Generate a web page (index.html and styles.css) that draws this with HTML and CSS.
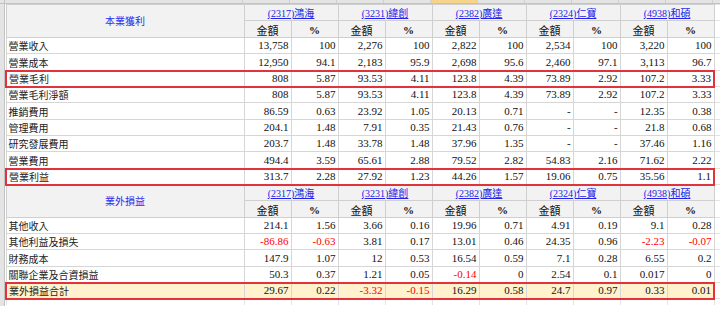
FILE: index.html
```html
<!DOCTYPE html>
<html lang="zh-Hant">
<head>
<meta charset="utf-8">
<title>損益比較</title>
<link rel="stylesheet" href="styles.css">
</head>
<body>
<div class="sheet">
  <div class="colhdr">
    <div class="corner"></div>
    <div class="ch wide">A</div>
    <div class="ch">B</div>
    <div class="ch">C</div>
    <div class="ch">D</div>
    <div class="ch">E</div>
    <div class="ch sel">F</div>
    <div class="ch">G</div>
    <div class="ch">H</div>
    <div class="ch">I</div>
    <div class="ch">J</div>
    <div class="ch">K</div>
    <div class="ch">L</div>
  </div>
  <div class="main">
    <div class="rowhdr"></div>
    <table class="grid">
      <colgroup>
        <col class="c-label">
        <col class="c-num" span="10">
        <col class="c-extra">
      </colgroup>
      <tbody>
        <tr class="h1">
          <th class="sect" rowspan="2">本業獲利</th>
          <th class="co" colspan="2"><a href="#">(2317)鴻海</a></th>
          <th class="co" colspan="2"><a href="#">(3231)緯創</a></th>
          <th class="co" colspan="2"><a href="#">(2382)廣達</a></th>
          <th class="co" colspan="2"><a href="#">(2324)仁寶</a></th>
          <th class="co" colspan="2"><a href="#">(4938)和碩</a></th>
          <td class="x"></td>
        </tr>
        <tr class="h2">
          <th class="sub">金額</th><th class="sub pct">%</th>
          <th class="sub">金額</th><th class="sub pct">%</th>
          <th class="sub">金額</th><th class="sub pct">%</th>
          <th class="sub">金額</th><th class="sub pct">%</th>
          <th class="sub">金額</th><th class="sub pct">%</th>
          <td class="x"></td>
        </tr>
        <tr class="r">
          <td class="lbl">營業收入</td>
          <td>13,758</td><td>100</td><td>2,276</td><td>100</td><td>2,822</td><td>100</td><td>2,534</td><td>100</td><td>3,220</td><td>100</td>
          <td class="x"></td>
        </tr>
        <tr class="r tall">
          <td class="lbl">營業成本</td>
          <td>12,950</td><td>94.1</td><td>2,183</td><td>95.9</td><td>2,698</td><td>95.6</td><td>2,460</td><td>97.1</td><td>3,113</td><td>96.7</td>
          <td class="x"></td>
        </tr>
        <tr class="r box">
          <td class="lbl">營業毛利</td>
          <td>808</td><td>5.87</td><td>93.53</td><td>4.11</td><td>123.8</td><td>4.39</td><td>73.89</td><td>2.92</td><td>107.2</td><td class="end">3.33</td>
          <td class="x"></td>
        </tr>
        <tr class="r">
          <td class="lbl">營業毛利淨額</td>
          <td>808</td><td>5.87</td><td>93.53</td><td>4.11</td><td>123.8</td><td>4.39</td><td>73.89</td><td>2.92</td><td>107.2</td><td>3.33</td>
          <td class="x"></td>
        </tr>
        <tr class="r tall">
          <td class="lbl">推銷費用</td>
          <td>86.59</td><td>0.63</td><td>23.92</td><td>1.05</td><td>20.13</td><td>0.71</td><td>-</td><td>-</td><td>12.35</td><td>0.38</td>
          <td class="x"></td>
        </tr>
        <tr class="r">
          <td class="lbl">管理費用</td>
          <td>204.1</td><td>1.48</td><td>7.91</td><td>0.35</td><td>21.43</td><td>0.76</td><td>-</td><td>-</td><td>21.8</td><td>0.68</td>
          <td class="x"></td>
        </tr>
        <tr class="r">
          <td class="lbl">研究發展費用</td>
          <td>203.7</td><td>1.48</td><td>33.78</td><td>1.48</td><td>37.96</td><td>1.35</td><td>-</td><td>-</td><td>37.46</td><td>1.16</td>
          <td class="x"></td>
        </tr>
        <tr class="r tall">
          <td class="lbl">營業費用</td>
          <td>494.4</td><td>3.59</td><td>65.61</td><td>2.88</td><td>79.52</td><td>2.82</td><td>54.83</td><td>2.16</td><td>71.62</td><td>2.22</td>
          <td class="x"></td>
        </tr>
        <tr class="r box">
          <td class="lbl">營業利益</td>
          <td>313.7</td><td>2.28</td><td>27.92</td><td>1.23</td><td>44.26</td><td>1.57</td><td>19.06</td><td>0.75</td><td>35.56</td><td class="end">1.1</td>
          <td class="x"></td>
        </tr>
        <tr class="h1">
          <th class="sect" rowspan="2">業外損益</th>
          <th class="co" colspan="2"><a href="#">(2317)鴻海</a></th>
          <th class="co" colspan="2"><a href="#">(3231)緯創</a></th>
          <th class="co" colspan="2"><a href="#">(2382)廣達</a></th>
          <th class="co" colspan="2"><a href="#">(2324)仁寶</a></th>
          <th class="co" colspan="2"><a href="#">(4938)和碩</a></th>
          <td class="x"></td>
        </tr>
        <tr class="h2">
          <th class="sub">金額</th><th class="sub pct">%</th>
          <th class="sub">金額</th><th class="sub pct">%</th>
          <th class="sub">金額</th><th class="sub pct">%</th>
          <th class="sub">金額</th><th class="sub pct">%</th>
          <th class="sub">金額</th><th class="sub pct">%</th>
          <td class="x"></td>
        </tr>
        <tr class="r">
          <td class="lbl">其他收入</td>
          <td>214.1</td><td>1.56</td><td>3.66</td><td>0.16</td><td>19.96</td><td>0.71</td><td>4.91</td><td>0.19</td><td>9.1</td><td>0.28</td>
          <td class="x"></td>
        </tr>
        <tr class="r">
          <td class="lbl">其他利益及損失</td>
          <td class="neg">-86.86</td><td class="neg">-0.63</td><td>3.81</td><td>0.17</td><td>13.01</td><td>0.46</td><td>24.35</td><td>0.96</td><td class="neg">-2.23</td><td class="neg">-0.07</td>
          <td class="x"></td>
        </tr>
        <tr class="r tall">
          <td class="lbl">財務成本</td>
          <td>147.9</td><td>1.07</td><td>12</td><td>0.53</td><td>16.54</td><td>0.59</td><td>7.1</td><td>0.28</td><td>6.55</td><td>0.2</td>
          <td class="x"></td>
        </tr>
        <tr class="r">
          <td class="lbl">關聯企業及合資損益</td>
          <td>50.3</td><td>0.37</td><td>1.21</td><td>0.05</td><td class="neg">-0.14</td><td>0</td><td>2.54</td><td>0.1</td><td>0.017</td><td>0</td>
          <td class="x"></td>
        </tr>
        <tr class="r box total">
          <td class="lbl">業外損益合計</td>
          <td>29.67</td><td>0.22</td><td class="neg">-3.32</td><td class="neg">-0.15</td><td>16.29</td><td>0.58</td><td>24.7</td><td>0.97</td><td>0.33</td><td class="end">0.01</td>
          <td class="x"></td>
        </tr>
        <tr class="tail">
          <td></td><td></td><td></td><td></td><td></td><td></td><td></td><td></td><td></td><td></td><td></td><td class="x"></td>
        </tr>
      </tbody>
    </table>
  </div>
</div>
</body>
</html>
```

FILE: styles.css
```css
html, body {
  margin: 0;
  padding: 0;
  background: #ffffff;
}

body {
  width: 720px;
  height: 314px;
  overflow: hidden;
  font-family: "Liberation Serif", "Noto Sans CJK TC", serif;
  color: #111;
}

.sheet {
  width: 720px;
  overflow: hidden;
}

.colhdr {
  display: flex;
  height: 3px;
  background: #e4e4e4;
  border-bottom: 1px solid #c2c2c2;
  overflow: hidden;
}

.corner {
  flex: 0 0 4px;
  border-right: 1px solid #c2c2c2;
}

.ch {
  flex: 0 0 46px;
  border-right: 1px solid #cfcfcf;
  display: flex;
  align-items: flex-end;
  justify-content: center;
  font-family: "Liberation Sans", sans-serif;
  font-size: 11px;
  line-height: 13px;
  color: #666;
  overflow: hidden;
}

.ch.wide {
  flex-basis: 237px;
}

.ch.sel {
  background: #f6d58a;
}

.main {
  display: flex;
  align-items: flex-start;
}

.rowhdr {
  flex: 0 0 4px;
  height: 302px;
  background: #e4e4e4;
  border-right: 1px solid #c2c2c2;
}

.grid {
  border-collapse: collapse;
  table-layout: fixed;
  width: 738px;
  flex: 0 0 738px;
}

.c-label { width: 238px; }
.c-num { width: 47px; }
.c-extra { width: 30px; }

.grid td,
.grid th {
  border: 1px solid #d6d6d6;
  padding: 0 2px 0 2px;
  overflow: hidden;
  white-space: nowrap;
  font-weight: normal;
}

.h1 {
  height: 16px;
}

.h2 {
  height: 17px;
}

.h1 th, .h2 th {
  background: #f2f2f2;
  border-color: #cfcfcf;
  text-align: center;
}

.sect {
  font-family: "Noto Sans CJK TC", sans-serif;
  font-size: 10px;
  line-height: 12px;
  color: #2a2af0;
  vertical-align: middle;
}

.co {
  font-size: 10px;
  line-height: 13px;
  vertical-align: bottom;
}

.co a {
  color: #2323e8;
  text-decoration: underline;
}

.sub {
  font-family: "Noto Sans CJK TC", sans-serif;
  font-size: 11px;
  line-height: 14px;
  vertical-align: bottom;
  color: #111;
}

.sub.pct {
  font-family: "Liberation Serif", serif;
  font-weight: bold;
  font-size: 11px;
}

.r {
  height: 16px;
}

.r.tall {
  height: 17px;
}

.r td {
  text-align: right;
  font-size: 11px;
  line-height: 13px;
  vertical-align: bottom;
  padding-bottom: 1px;
}

.r td.lbl {
  text-align: left;
  font-family: "Noto Sans CJK TC", sans-serif;
  font-size: 10px;
  padding-left: 2px;
  color: #222;
}

.r td.neg {
  color: #ff0000;
}

.grid td.x {
  border-color: #e2e2e2;
  background: #ffffff;
}

.box td {
  border-top: 2px solid #e2323c;
  border-bottom: 2px solid #e2323c;
}

.box td.lbl {
  border-left: 2px solid #e2323c;
}

.box td.end {
  border-right: 2px solid #e2323c;
}

.box td.x {
  border-top-color: #e2e2e2;
  border-bottom-color: #e2e2e2;
  border-top-width: 1px;
  border-bottom-width: 1px;
}

.total td {
  background: #fff2cc;
}

.tail {
  height: 6px;
}

.tail td {
  border-color: #e2e2e2;
  border-bottom: none;
  padding: 0;
}
```
